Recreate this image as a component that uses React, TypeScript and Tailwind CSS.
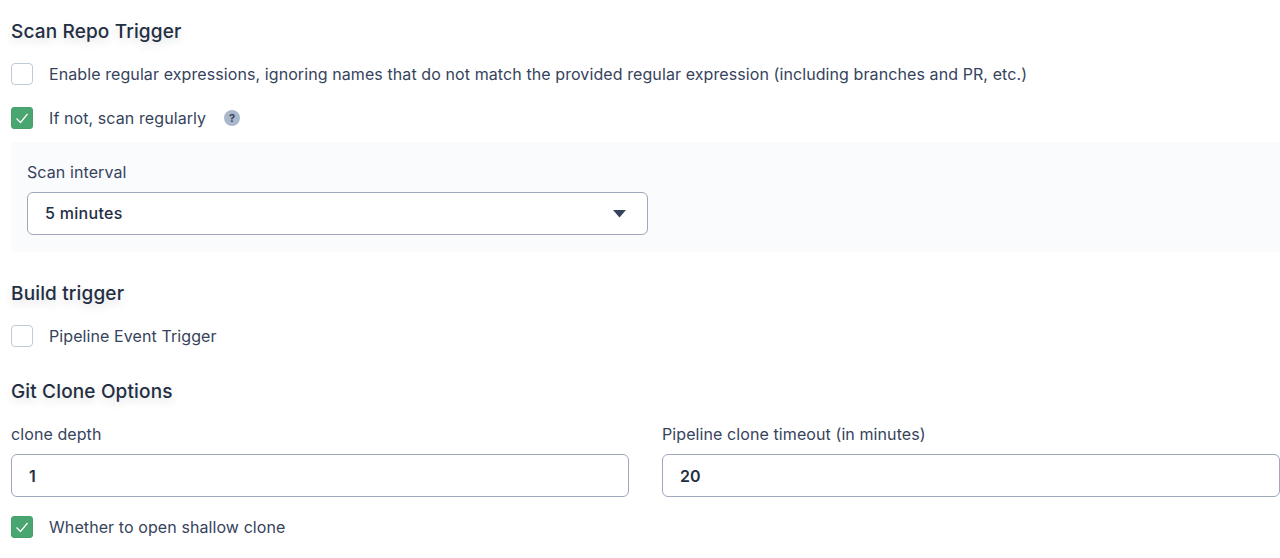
import React from 'react';

const Check = ({ checked }: { checked?: boolean }) =>
    checked ? (
        <span className="w-[22px] h-[22px] shrink-0 rounded-[3px] bg-[#4aa671] border border-[#45a06b] flex items-center justify-center">
            <svg width="14" height="14" viewBox="0 0 14 14" fill="none">
                <path d="M1.5 7.5L5.5 11.5L12.5 3" stroke="#ffffff" strokeWidth="1.2" />
            </svg>
        </span>
    ) : (
        <span className="w-[22px] h-[22px] shrink-0 rounded-[4px] bg-white border border-[#bfcad8]" />
    );

const Heading = ({ children }: { children: React.ReactNode }) => (
    <h2 className="text-[19px] leading-[24px] font-medium tracking-[0.15px] text-[#242e42] [text-shadow:0_4px_8px_rgba(36,46,66,0.15)]">{children}</h2>
);

const Field = ({ label, value }: { label: string; value: string }) => (
    <div className="flex-1 min-w-0">
        <div className="leading-[20px]">{label}</div>
        <div className="mt-[10px] h-[43px] rounded-[6px] border border-[#9da8ba] bg-white flex items-center pl-[17px] font-semibold tracking-normal text-[#242e42]">
            {value}
        </div>
    </div>
);

export default function App() {
    return (
        <div className="w-[1280px] h-[558px] overflow-hidden bg-white pl-[11px] pt-[20px] font-['Inter',sans-serif] text-[16px] tracking-[0.09px] text-[#36435c]">
            <Heading>Scan Repo Trigger</Heading>

            <div className="mt-[19px] flex items-center gap-[16px] h-[22px]">
                <Check />
                <span>Enable regular expressions, ignoring names that do not match the provided regular expression (including branches and PR, etc.)</span>
            </div>
            <div className="mt-[22px] flex items-center h-[22px]">
                <Check checked />
                <span className="ml-[16px]">If not, scan regularly</span>
                <span className="ml-[18px] w-[16px] h-[16px] rounded-full bg-[#abb8cb] flex items-center justify-center text-[11px] font-bold text-[#36435c]">?</span>
            </div>

            <div className="mt-[13px] h-[110px] rounded-l-[4px] bg-[#f9fbfd] pl-[16px] pt-[20px]">
                <div className="leading-[20px]">Scan interval</div>
                <div className="mt-[10px] w-[621px] h-[43px] rounded-[6px] border border-[#9da8ba] bg-white flex items-center justify-between pl-[17px] pr-[21px] font-medium tracking-[0.3px] text-[#242e42]">
                    <span className="-mt-[2px]">5 minutes</span>
                    <svg width="13" height="8" viewBox="0 0 13 8">
                        <path d="M0 0H13L6.5 7.5Z" fill="#36435c" />
                    </svg>
                </div>
            </div>

            <div className="mt-[30px]">
                <Heading>Build trigger</Heading>
            </div>
            <div className="mt-[19px] flex items-center gap-[16px] h-[22px]">
                <Check />
                <span>Pipeline Event Trigger</span>
            </div>

            <div className="mt-[33px]">
                <Heading>Git Clone Options</Heading>
            </div>
            <div className="mt-[20px] flex gap-[33px]">
                <Field label="clone depth" value="1" />
                <Field label="Pipeline clone timeout (in minutes)" value="20" />
            </div>
            <div className="mt-[19px] flex items-center gap-[16px] h-[22px]">
                <Check checked />
                <span>Whether to open shallow clone</span>
            </div>
        </div>
    );
}
